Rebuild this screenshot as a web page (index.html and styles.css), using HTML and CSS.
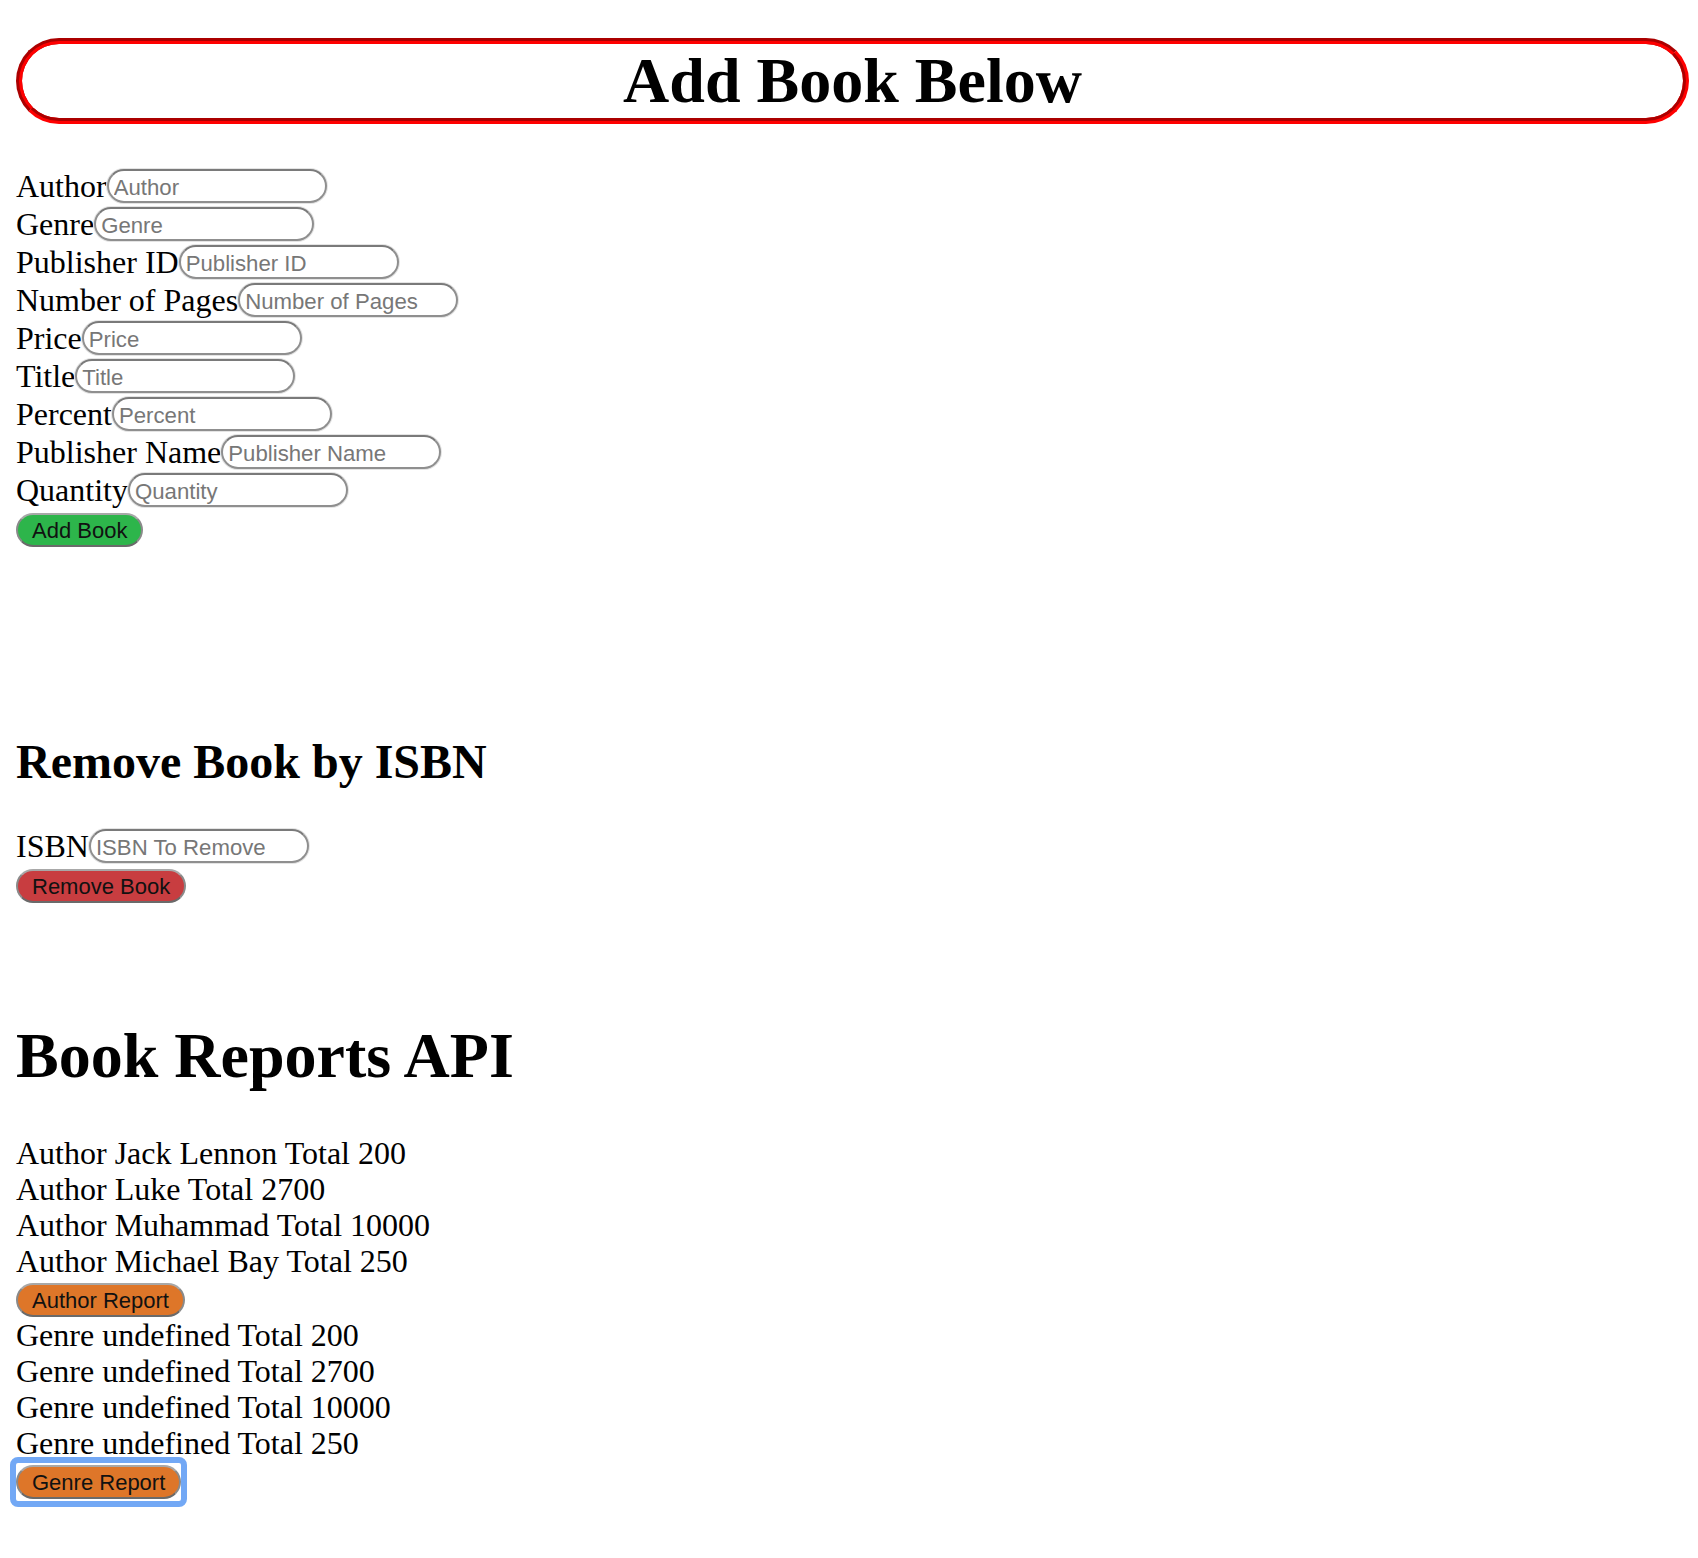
FILE: index.html
```html
<!DOCTYPE html>
<html lang="en">
<head>
<meta charset="utf-8">
<title>Books</title>
<link rel="stylesheet" href="styles.css">
</head>
<body>
<main class="page">
  <h1 class="banner">Add Book Below</h1>

  <form class="book-form">
    <div class="row"><label class="lbl">Author</label><input class="field" type="text" placeholder="Author"></div>
    <div class="row"><label class="lbl">Genre</label><input class="field" type="text" placeholder="Genre"></div>
    <div class="row"><label class="lbl">Publisher ID</label><input class="field" type="text" placeholder="Publisher ID"></div>
    <div class="row"><label class="lbl">Number of Pages</label><input class="field" type="text" placeholder="Number of Pages"></div>
    <div class="row"><label class="lbl">Price</label><input class="field" type="text" placeholder="Price"></div>
    <div class="row"><label class="lbl">Title</label><input class="field" type="text" placeholder="Title"></div>
    <div class="row"><label class="lbl">Percent</label><input class="field" type="text" placeholder="Percent"></div>
    <div class="row"><label class="lbl">Publisher Name</label><input class="field" type="text" placeholder="Publisher Name"></div>
    <div class="row"><label class="lbl">Quantity</label><input class="field" type="text" placeholder="Quantity"></div>
    <button class="btn btn-green" type="button">Add Book</button>
  </form>

  <h2 class="section-title">Remove Book by ISBN</h2>
  <form class="book-form">
    <div class="row"><label class="lbl">ISBN</label><input class="field" type="text" placeholder="ISBN To Remove"></div>
    <button class="btn btn-red" type="button">Remove Book</button>
  </form>

  <h1 class="reports-title">Book Reports API</h1>
  <div class="report">
    <div class="line">Author Jack Lennon Total 200</div>
    <div class="line">Author Luke Total 2700</div>
    <div class="line">Author Muhammad Total 10000</div>
    <div class="line">Author Michael Bay Total 250</div>
    <button class="btn btn-orange" type="button">Author Report</button>
    <div class="line">Genre undefined Total 200</div>
    <div class="line">Genre undefined Total 2700</div>
    <div class="line">Genre undefined Total 10000</div>
    <div class="line">Genre undefined Total 250</div>
    <button class="btn btn-orange focused" type="button">Genre Report</button>
  </div>
</main>
</body>
</html>
```

FILE: styles.css
```css
html, body {
  margin: 0;
  padding: 0;
  background: #ffffff;
}

body {
  font-family: "Liberation Serif", "Times New Roman", serif;
  font-size: 32px;
  color: #000;
}

.page {
  padding: 38px 9px 40px 16px;
}

.banner {
  margin: 0 0 43px 0;
  font-size: 64px;
  font-weight: bold;
  text-align: center;
  border: 6px groove #ff0000;
  border-radius: 46px;
  line-height: normal;
}

.book-form {
  margin: 0;
}

.row {
  display: flex;
  align-items: center;
  height: 38px;
}

.lbl {
  font-size: 32px;
  line-height: 1;
  white-space: nowrap;
}

.field {
  box-sizing: border-box;
  width: 220px;
  height: 34px;
  margin: 0;
  padding: 4px 4px 0 5px;
  border: 2px solid #8f8f8f;
  border-top-color: #7a7a7a;
  border-radius: 17px;
  background: #fff;
  font-family: "Liberation Sans", Arial, sans-serif;
  font-size: 22.2px;
  color: #000;
  box-shadow: 0 0 0 1px #e4e4e4;
  outline: none;
}

.field::placeholder {
  color: #777777;
}

.btn {
  display: block;
  position: relative;
  box-sizing: border-box;
  height: 34px;
  margin: 4px 0 0 0;
  padding: 1px 14px 0 14px;
  border: 2px solid #8a8a8a;
  border-top-color: #a8a8a8;
  border-bottom-color: #6a6a6a;
  border-radius: 17px;
  font-family: "Liberation Sans", Arial, sans-serif;
  font-size: 22px;
  line-height: 1;
  color: #111;
  cursor: pointer;
}

.btn-green {
  background: #2db54b;
}

.btn-red {
  background: #c83d40;
}

.btn-orange {
  background: #de7629;
}

.focused::after {
  content: "";
  position: absolute;
  top: -10px;
  bottom: -10px;
  left: -8px;
  right: -8px;
  border: 6px solid #72a8f5;
  border-radius: 8px;
  pointer-events: none;
}

.section-title {
  margin: 187px 0 38px 0;
  font-size: 48px;
  font-weight: bold;
  line-height: normal;
}

.reports-title {
  margin: 116px 0 42px 0;
  font-size: 64px;
  font-weight: bold;
  line-height: normal;
}

.report .line {
  font-size: 32px;
  line-height: 36px;
}

.report .btn-orange {
  margin-bottom: 0;
}
```
